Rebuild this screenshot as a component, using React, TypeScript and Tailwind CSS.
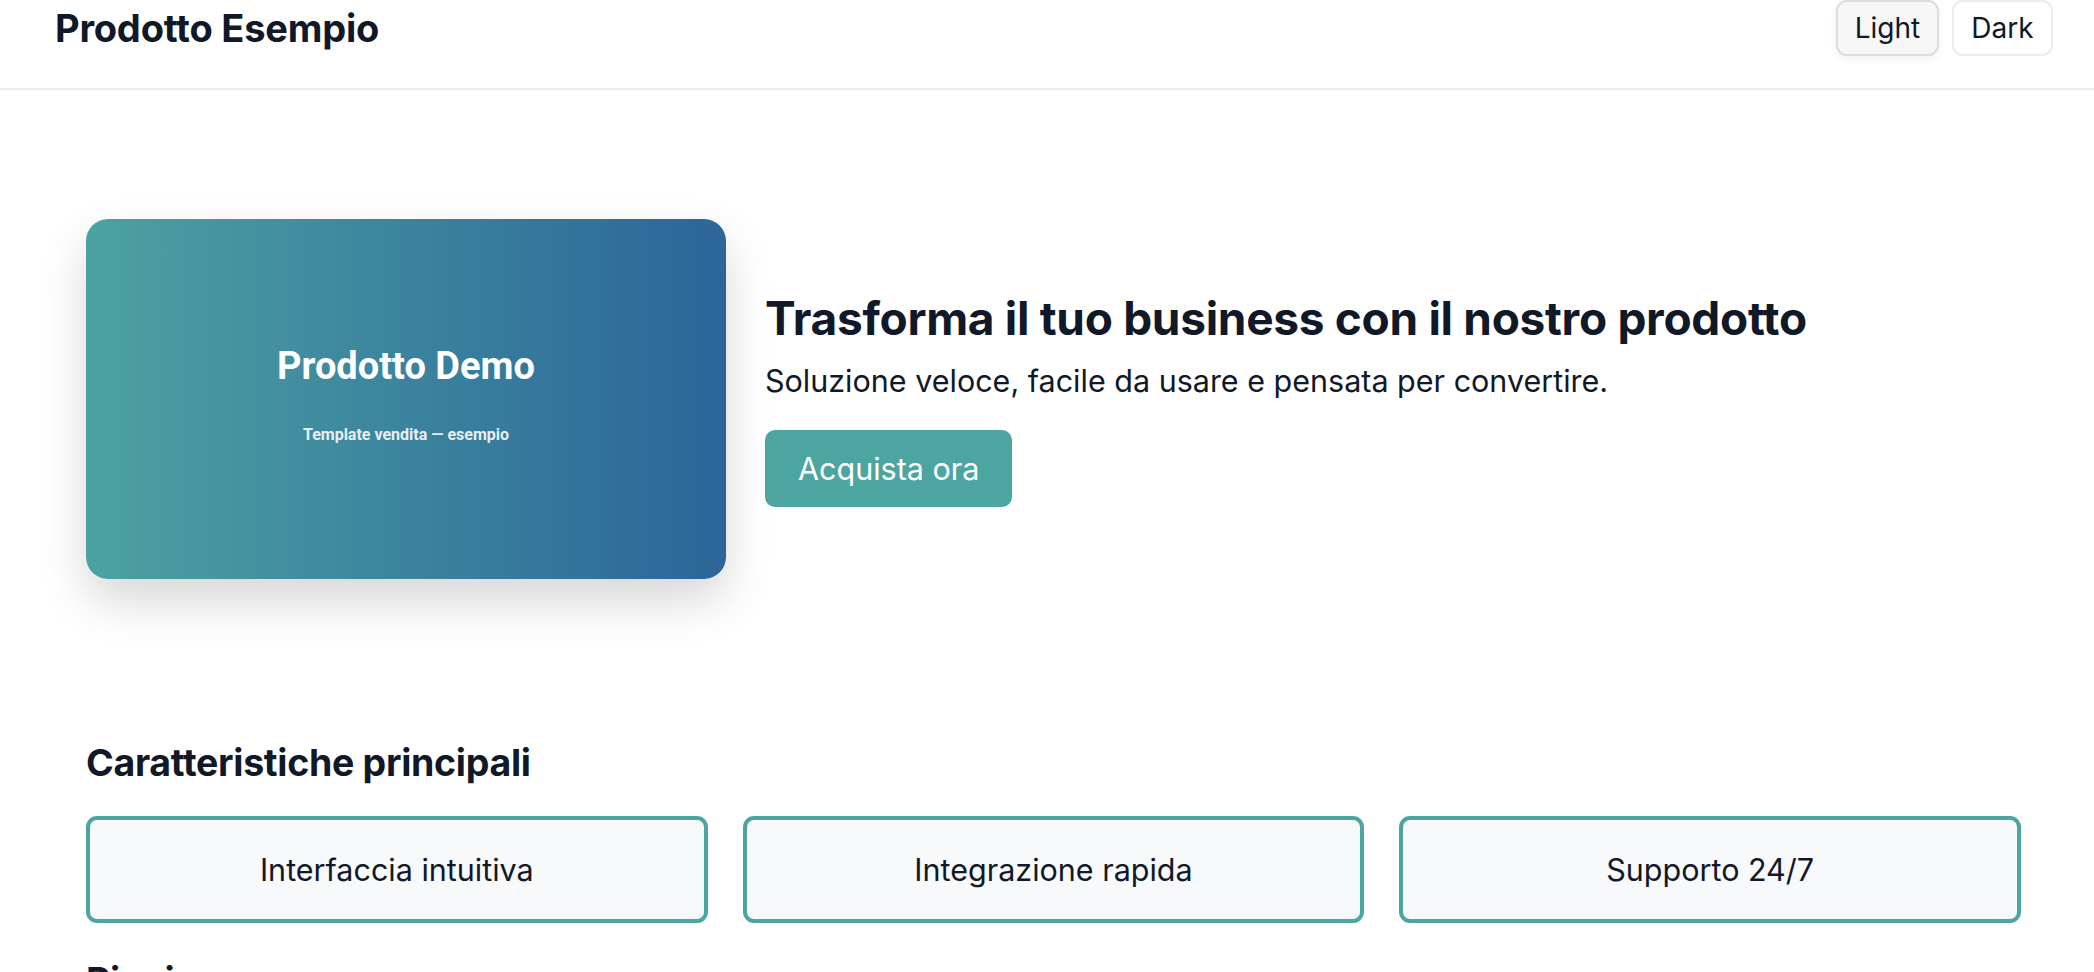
import { useState } from "react";

const FEATURES = ["Interfaccia intuitiva", "Integrazione rapida", "Supporto 24/7"];

export default function App() {
  const [theme, setTheme] = useState<"light" | "dark">("light");

  return (
    <div className="min-h-screen bg-white text-[#111827] [font-family:Inter,'Liberation_Sans',sans-serif]">
      <header className="flex h-[90px] items-start justify-between border-b-2 border-[#ededed] pl-[55px] pr-[41px]">
        <h1 className="flex h-[56px] items-center text-[38px] font-bold tracking-[-0.2px]">Prodotto Esempio</h1>
        <div className="flex gap-[13px]">
          <button
            onClick={() => setTheme("light")}
            className={`flex h-[56px] w-[103px] items-center justify-center rounded-[11px] border-2 text-[28px] ${theme === "light" ? "border-[#dcdcdc] bg-[#f7f7f7] shadow-[0_3px_8px_rgba(0,0,0,0.06)]" : "border-[#ececec] bg-white"}`}
          >
            Light
          </button>
          <button
            onClick={() => setTheme("dark")}
            className={`flex h-[56px] w-[101px] items-center justify-center rounded-[11px] border-2 text-[28px] ${theme === "dark" ? "border-[#dcdcdc] bg-[#f7f7f7] shadow-[0_3px_8px_rgba(0,0,0,0.06)]" : "border-[#ececec] bg-white"}`}
          >
            Dark
          </button>
        </div>
      </header>

      <main className="pl-[86px] pr-[73px]">
        <section className="flex items-center gap-[39px] pt-[129px]">
          <div className="flex h-[360px] w-[640px] shrink-0 flex-col items-center justify-center rounded-[22px] bg-gradient-to-r from-[#4ca2a1] to-[#2d6599] text-white shadow-[0_22px_48px_rgba(0,0,0,0.16)] [font-family:Roboto,'Liberation_Sans',sans-serif]">
            <h2 className="mt-[-4px] text-[38px] font-bold leading-none">Prodotto Demo</h2>
            <p className="mt-[38px] text-[16px] font-bold text-[#e8f0f4]">Template vendita — esempio</p>
          </div>
          <div className="flex flex-col items-start">
            <h2 className="text-[46px] font-bold leading-[54px] tracking-[-0.3px]">
              Trasforma il tuo business con il nostro prodotto
            </h2>
            <p className="mt-[12px] text-[30.5px] leading-[48px]">
              Soluzione veloce, facile da usare e pensata per convertire.
            </p>
            <button className="mt-[25px] h-[77px] rounded-[10px] bg-[#4ca5a1] px-[33px] text-[30.5px] text-white">
              Acquista ora
            </button>
          </div>
        </section>

        <section className="mt-[160px]">
          <h2 className="text-[37.5px] font-bold leading-[47px] tracking-[-0.3px]">Caratteristiche principali</h2>
          <div className="mt-[30px] grid grid-cols-3 gap-[35px]">
            {FEATURES.map((f) => (
              <div
                key={f}
                className="flex h-[107px] items-center justify-center rounded-[11px] border-4 border-[#4ca5a1] bg-[#f8f9fb] text-[30.5px]"
              >
                {f}
              </div>
            ))}
          </div>
        </section>

        <section className="mt-[34px] pb-[80px]">
          <h2 className="text-[37.5px] font-bold leading-[47px] tracking-[-0.3px]">Piani</h2>
        </section>
      </main>
    </div>
  );
}
